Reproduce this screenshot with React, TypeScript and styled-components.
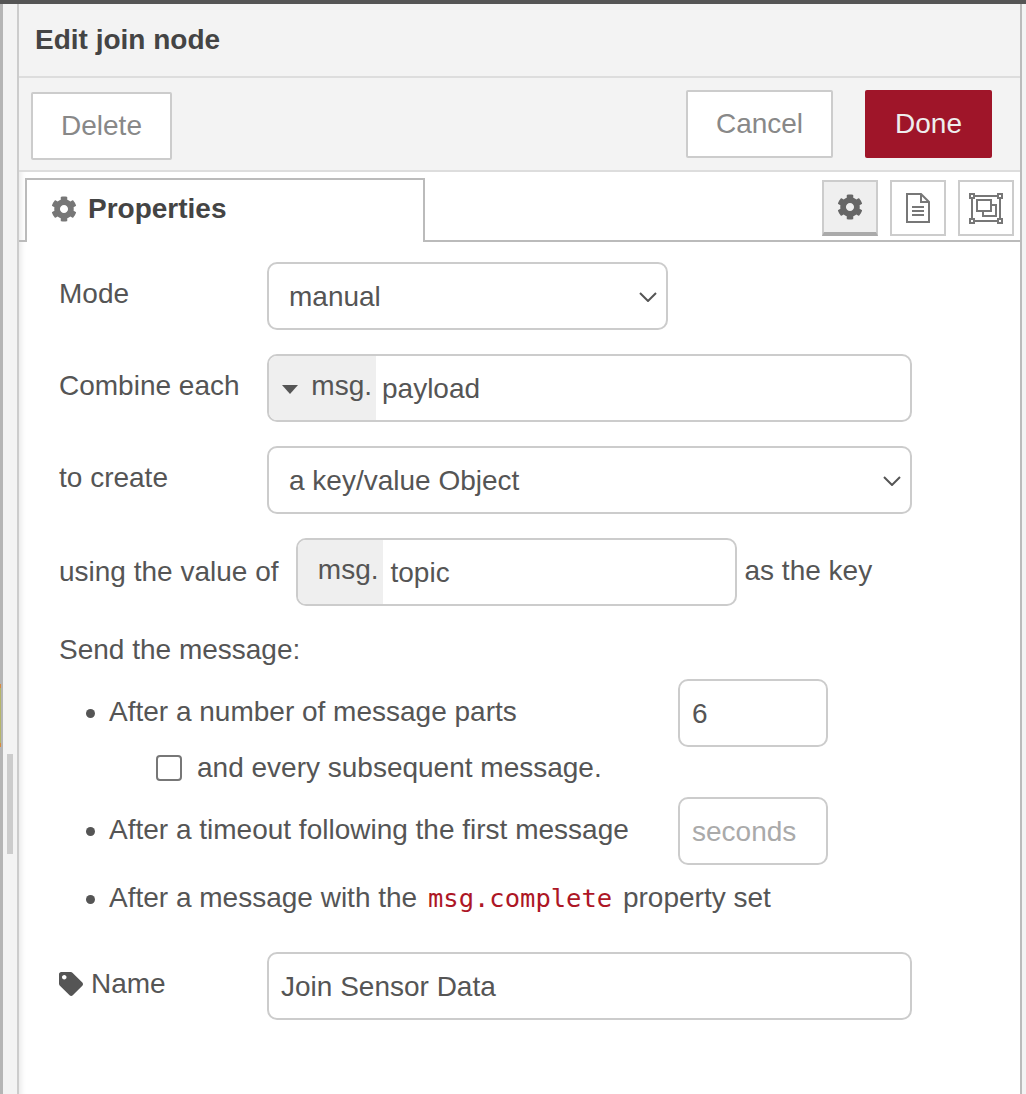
import * as React from 'react';
import styled, { createGlobalStyle } from 'styled-components';
import { FaCog, FaTag } from 'react-icons/fa';

const Global = createGlobalStyle`
  html, body { margin: 0; padding: 0; height: 100%; overflow: hidden; }
  body { font-family: "Liberation Sans", Arial, sans-serif; background: #f3f3f3; }
`;

const Screen = styled.div`
  width: 1026px;
  height: 1094px;
  display: flex;
  flex-direction: column;
  overflow: hidden;
  box-sizing: border-box;
  *, *::before { box-sizing: border-box; }
`;
const TopBar = styled.div`
  height: 4px;
  flex: none;
  background: #555;
`;
const Workspace = styled.div`
  flex: 1;
  display: flex;
  min-height: 0;
`;
const LeftEdge = styled.div`
  width: 3px;
  flex: none;
  background: #b5b5b5;
  position: relative;
`;
const NodeSliver = styled.div`
  position: absolute;
  left: 0;
  top: 680px;
  width: 1px;
  height: 63px;
  background: linear-gradient(#d98a3d 0 4px, #b5b56a 4px 59px, #d98a3d 59px);
`;
const LeftGutter = styled.div`
  width: 14px;
  flex: none;
  background: #f3f3f3;
  position: relative;
`;
const ScrollThumb = styled.div`
  position: absolute;
  left: 4px;
  top: 750px;
  width: 6px;
  height: 100px;
  background: #ccc;
`;
const Tray = styled.div`
  flex: 1;
  display: flex;
  flex-direction: column;
  min-width: 0;
  background: #fff;
  border-left: 2px solid #ccc;
  border-right: 2px solid #bbb;
  margin-right: 4px;
  box-shadow: inset 7px 0 6px -6px rgba(0, 0, 0, 0.12);
`;
const TitleBar = styled.div`
  height: 74px;
  flex: none;
  display: flex;
  align-items: center;
  padding-left: 16px;
  background: #f3f3f3;
  border-bottom: 2px solid #ddd;
  font-size: 28px;
  font-weight: 700;
  color: #444;
`;
const Toolbar = styled.div`
  height: 94px;
  flex: none;
  display: flex;
  align-items: center;
  justify-content: space-between;
  padding: 0 28px 0 12px;
  background: #f3f3f3;
  border-bottom: 2px solid #ddd;
`;
const ToolGroup = styled.div`
  display: flex;
  align-items: center;
  gap: 32px;
`;
const Button = styled.button<{ $w: number; $primary?: boolean }>`
  width: ${p => p.$w}px;
  height: 68px;
  padding: 0;
  font: 28px "Liberation Sans", Arial, sans-serif;
  color: ${p => (p.$primary ? '#eee' : '#888')};
  background: ${p => (p.$primary ? '#9f1529' : '#fff')};
  border: ${p => (p.$primary ? 'none' : '2px solid #ccc')};
  border-radius: 2px;
`;
const DeleteButton = styled(Button)`
  margin-top: 4px;
`;
const TabRow = styled.div`
  height: 70px;
  flex: none;
  display: flex;
  align-items: flex-end;
  justify-content: space-between;
  padding: 0 6px 0 6px;
  border-bottom: 2px solid #bbb;
`;
const Tab = styled.div`
  width: 400px;
  height: 64px;
  margin-bottom: -2px;
  display: flex;
  align-items: center;
  gap: 11px;
  padding: 0 0 4px 24px;
  background: #fff;
  border: 2px solid #bbb;
  border-bottom: none;
  font-size: 28px;
  font-weight: 700;
  color: #444;
  svg { color: #777; }
`;
const TabButtons = styled.div`
  display: flex;
  gap: 12px;
  margin-bottom: 4px;
`;
const TabButton = styled.div<{ $active?: boolean }>`
  width: 56px;
  height: 56px;
  display: flex;
  align-items: center;
  justify-content: center;
  color: #666;
  background: ${p => (p.$active ? '#efefef' : '#fff')};
  border: 2px solid #ccc;
  border-bottom: ${p => (p.$active ? '4px solid #aaa' : '2px solid #ccc')};
`;
const Form = styled.div`
  flex: 1;
  padding: 20px 0 0 40px;
  color: #555;
  font-size: 28px;
`;
const Row = styled.div`
  display: flex;
  align-items: center;
  height: 68px;
  margin-bottom: 24px;
`;
const Label = styled.label`
  width: 208px;
  flex: none;
  margin-top: -5px;
  display: flex;
  align-items: center;
  gap: 8px;
`;
const InlineLabel = styled.span`
  margin-top: -1px;
  margin-right: 17px;
`;
const Trailing = styled.span`
  margin-left: 8px;
  margin-top: -3px;
`;
const Field = styled.div<{ $w: number }>`
  width: ${p => p.$w}px;
  height: 68px;
  display: flex;
  align-items: stretch;
  background: #fff;
  border: 2px solid #ccc;
  border-radius: 10px;
  overflow: hidden;
`;
const SelectField = styled(Field)`
  align-items: center;
  justify-content: space-between;
  padding: 1px 9px 0 20px;
`;
const TextField = styled(Field)<{ $muted?: boolean }>`
  align-items: center;
  padding: 1px 0 0 12px;
  color: ${p => (p.$muted ? '#aaa' : '#555')};
`;
const TypePrefix = styled.div<{ $w: number }>`
  width: ${p => p.$w}px;
  flex: none;
  display: flex;
  align-items: center;
  justify-content: flex-end;
  gap: 13px;
  padding: 0 4px 4px 0;
  background: #efefef;
`;
const TypeValue = styled.div<{ $pad: number }>`
  display: flex;
  align-items: center;
  padding: 1px 0 0 ${p => p.$pad}px;
`;
const Caret = styled.span`
  width: 0;
  height: 0;
  border-left: 8px solid transparent;
  border-right: 8px solid transparent;
  border-top: 9px solid #555;
  margin-top: 7px;
`;
const SendLabel = styled.div`
  height: 31px;
  display: flex;
  align-items: center;
  margin-top: 28px;
  margin-bottom: 14px;
`;
const Rule = styled.div<{ $h: number; $gap: number }>`
  height: ${p => p.$h}px;
  margin-bottom: ${p => p.$gap}px;
  display: flex;
  align-items: center;
  padding-left: 50px;
  position: relative;
  &::before {
    content: '';
    position: absolute;
    left: 27px;
    top: calc(50% - 4px);
    width: 9px;
    height: 9px;
    border-radius: 50%;
    background: #555;
  }
`;
const RuleText = styled.span`
  width: 569px;
  flex: none;
  margin-top: -2px;
  white-space: nowrap;
`;
const SubRow = styled.div`
  height: 36px;
  margin-bottom: 12px;
  padding-top: 1px;
  display: flex;
  align-items: center;
  gap: 15px;
  padding-left: 97px;
`;
const CheckBox = styled.span`
  width: 26px;
  height: 26px;
  border: 2px solid #777;
  border-radius: 4px;
  background: #fff;
`;
const Code = styled.code`
  font-family: "DejaVu Sans Mono", monospace;
  font-size: 25.5px;
  color: #ad1625;
  margin: 0 3px;
`;
const NameRow = styled(Row)`
  margin-top: 34px;
`;

const DocIcon = () => (
  <svg width="26" height="30" viewBox="0 0 26 30" fill="none" stroke="#777" strokeWidth="2">
    <path d="M2 1h14l8 8v20H2z" />
    <path d="M16 1v8h8" />
    <path d="M7 14h12M7 18h12M7 22h12" />
  </svg>
);
const GroupIcon = () => (
  <svg width="34" height="31" viewBox="0 0 34 31" fill="none" stroke="#777" strokeWidth="2">
    <path d="M5 3h24M5 28h24M3 5v21M31 5v21" />
    <rect x="1" y="1" width="4" height="4" />
    <rect x="29" y="1" width="4" height="4" />
    <rect x="1" y="26" width="4" height="4" />
    <rect x="29" y="26" width="4" height="4" />
    <path d="M8 7h14v5h5v11H14v-5H8z" />
    <path d="M14 18h8v-6" />
  </svg>
);
const Chevron = () => (
  <svg width="18" height="10" viewBox="0 0 18 10" fill="none" stroke="#555" strokeWidth="2">
    <path d="M1 1l8 8 8-8" />
  </svg>
);

export default function App() {
  return (
    <Screen>
      <Global />
      <TopBar />
      <Workspace>
        <LeftEdge>
          <NodeSliver />
        </LeftEdge>
        <LeftGutter>
          <ScrollThumb />
        </LeftGutter>
        <Tray>
          <TitleBar>Edit join node</TitleBar>
          <Toolbar>
            <DeleteButton $w={141}>Delete</DeleteButton>
            <ToolGroup>
              <Button $w={147}>Cancel</Button>
              <Button $w={127} $primary>Done</Button>
            </ToolGroup>
          </Toolbar>
          <TabRow>
            <Tab><FaCog size={26} />Properties</Tab>
            <TabButtons>
              <TabButton $active><FaCog size={26} /></TabButton>
              <TabButton><DocIcon /></TabButton>
              <TabButton><GroupIcon /></TabButton>
            </TabButtons>
          </TabRow>
          <Form>
            <Row>
              <Label>Mode</Label>
              <SelectField $w={401}>manual<Chevron /></SelectField>
            </Row>
            <Row>
              <Label>Combine each</Label>
              <Field $w={645}>
                <TypePrefix $w={107}><Caret />msg.</TypePrefix>
                <TypeValue $pad={6}>payload</TypeValue>
              </Field>
            </Row>
            <Row>
              <Label>to create</Label>
              <SelectField $w={645}>a key/value Object<Chevron /></SelectField>
            </Row>
            <Row>
              <InlineLabel>using the value of</InlineLabel>
              <Field $w={441}>
                <TypePrefix $w={85}>msg.</TypePrefix>
                <TypeValue $pad={8}>topic</TypeValue>
              </Field>
              <Trailing>as the key</Trailing>
            </Row>
            <SendLabel>Send the message:</SendLabel>
            <Rule $h={68} $gap={2}>
              <RuleText>After a number of message parts</RuleText>
              <TextField $w={150}>6</TextField>
            </Rule>
            <SubRow><CheckBox />and every subsequent message.</SubRow>
            <Rule $h={68} $gap={15}>
              <RuleText>After a timeout following the first message</RuleText>
              <TextField $w={150} $muted>seconds</TextField>
            </Rule>
            <Rule $h={38} $gap={0}>
              <RuleText>After a message with the <Code>msg.complete</Code> property set</RuleText>
            </Rule>
            <NameRow>
              <Label><FaTag size={24} />Name</Label>
              <TextField $w={645}>Join Sensor Data</TextField>
            </NameRow>
          </Form>
        </Tray>
      </Workspace>
    </Screen>
  );
}
